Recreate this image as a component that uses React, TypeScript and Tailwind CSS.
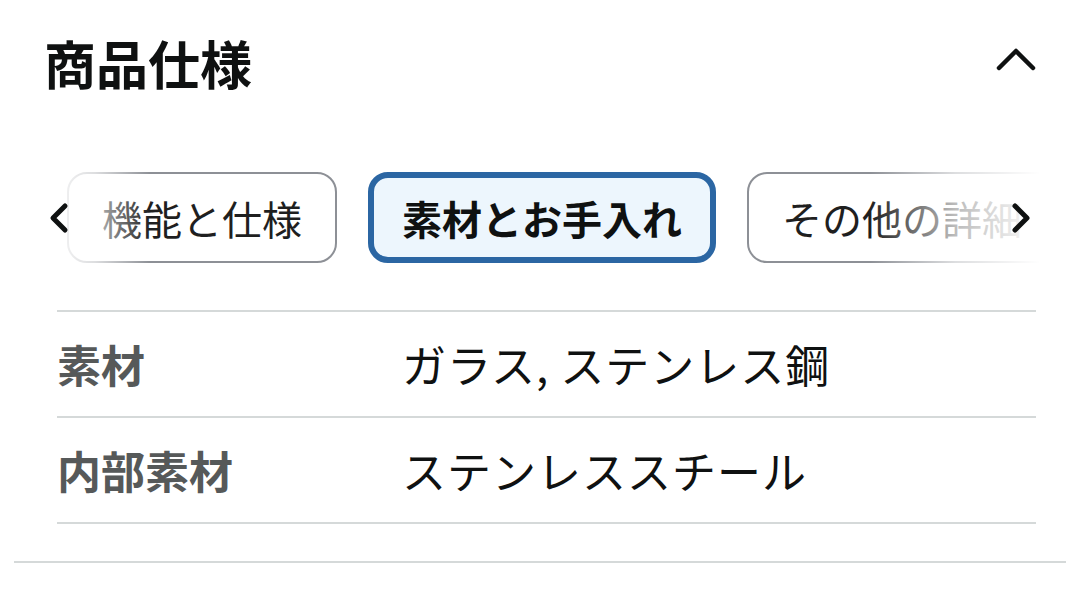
import React from 'react';

const font = { fontFamily: '"Noto Sans CJK JP", "Noto Sans", sans-serif' };

const specs = [
  { label: '素材', value: 'ガラス, ステンレス鋼' },
  { label: '内部素材', value: 'ステンレススチール' },
];

function Chevron({ dir }: { dir: 'left' | 'right' }) {
  return (
    <svg width="24" height="32" viewBox="0 0 24 32" fill="none">
      <path
        d={dir === 'left' ? 'M17 4 L5 16 L17 28' : 'M7 4 L19 16 L7 28'}
        stroke="#0f1111"
        strokeWidth="5"
        strokeLinecap="round"
        strokeLinejoin="round"
      />
    </svg>
  );
}

export default function App() {
  return (
    <div className="w-[1080px] h-[597px] bg-white overflow-hidden" style={font}>
      {/* header */}
      <div className="flex items-center justify-between pl-[44px] pr-[44px] pt-[32px]">
        <h2 className="text-[52px] leading-[62px] font-bold text-[#0f1111]">商品仕様</h2>
        <svg width="40" height="26" viewBox="0 0 40 26" fill="none" className="mt-[-8px]">
          <path d="M3 22 L20 5 L37 22" stroke="#0f1111" strokeWidth="4.5" strokeLinecap="round" strokeLinejoin="round" />
        </svg>
      </div>

      {/* tabs */}
      <div className="relative mt-[78px] ml-[40px] w-[1000px] h-[91px] overflow-hidden">
        <div className="flex gap-[31px] pl-[27px] whitespace-nowrap">
          <div className="h-[91px] flex items-center px-[33px] border-2 border-[#8d9096] rounded-[20px] text-[40px] text-[#1f1f1f] bg-white">
            機能と仕様
          </div>
          <div className="h-[91px] flex items-center px-[28px] border-[6px] border-[#2b66a3] rounded-[20px] text-[40px] font-bold text-[#0f1111] bg-[#edf6fd]">
            素材とお手入れ
          </div>
          <div className="h-[91px] flex items-center px-[33px] border-2 border-[#8d9096] rounded-[20px] text-[40px] text-[#1f1f1f] bg-white">
            その他の詳細
          </div>
        </div>
        <div className="absolute left-0 top-0 h-full w-[110px] bg-gradient-to-r from-white via-white/70 to-transparent" />
        <div className="absolute right-0 top-0 h-full w-[170px] bg-gradient-to-l from-white via-white/70 to-transparent" />
        <div className="absolute left-[8px] top-0 h-full flex items-center">
          <Chevron dir="left" />
        </div>
        <div className="absolute right-[8px] top-0 h-full flex items-center">
          <Chevron dir="right" />
        </div>
      </div>

      {/* spec table */}
      <div className="mt-[47px] ml-[57px] mr-[44px] border-t-2 border-[#d5d9d9]">
        {specs.map((s) => (
          <div key={s.label} className="flex items-center h-[106px] border-b-2 border-[#d5d9d9]">
            <div className="w-[345px] text-[44px] font-bold text-[#565959]">{s.label}</div>
            <div className="text-[44px] tracking-[1px] text-[#0f1111]">{s.value}</div>
          </div>
        ))}
      </div>

      <div className="mt-[37px] ml-[14px] mr-[14px] border-t-2 border-[#d5d9d9]" />
    </div>
  );
}
